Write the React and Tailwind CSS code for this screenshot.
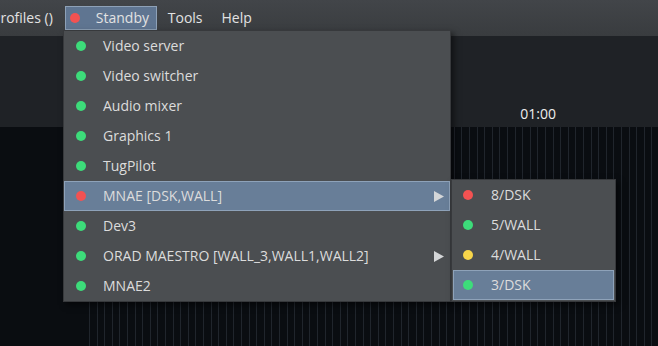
import React from "react";

const items = [
  { label: "Video server", dot: "green" },
  { label: "Video switcher", dot: "green" },
  { label: "Audio mixer", dot: "green" },
  { label: "Graphics 1", dot: "green" },
  { label: "TugPilot", dot: "green" },
  { label: "MNAE [DSK,WALL]", dot: "red", sub: true, active: true },
  { label: "Dev3", dot: "green" },
  { label: "ORAD MAESTRO [WALL_3,WALL1,WALL2]", dot: "green", sub: true },
  { label: "MNAE2", dot: "green" },
];

const subItems = [
  { label: "8/DSK", dot: "red" },
  { label: "5/WALL", dot: "green" },
  { label: "4/WALL", dot: "yellow" },
  { label: "3/DSK", dot: "green", active: true },
];

const dotColors = {
  green: "bg-[#3ddc7a]",
  red: "bg-[#f35252]",
  yellow: "bg-[#f7d54a]",
};

function Dot({ color }) {
  return <span className={`block w-[10px] h-[10px] rounded-full ${dotColors[color]}`} />;
}

function MenuRow({ item, compact }) {
  return (
    <div
      className={`flex items-center h-[30px] border whitespace-nowrap ${
        item.active ? "bg-[#687e98] border-[#8ea2b9]" : "border-transparent"
      }`}
    >
      <div className={`flex justify-center ${compact ? "w-[28px]" : "w-[31px]"}`}>
        <Dot color={item.dot} />
      </div>
      <span className={`${compact ? "ml-[9px]" : "ml-[7px]"} flex-1 text-[#dcdcdc] -mt-[2px]`}>{item.label}</span>
      {item.sub && (
        <svg width="10" height="11" viewBox="0 0 10 11" className="mr-[5px]">
          <path d="M0 0 L10 5.5 L0 11 Z" fill="#d4d6d8" />
        </svg>
      )}
    </div>
  );
}

export default function App() {
  return (
    <div
      className="relative w-[658px] h-[346px] overflow-hidden flex flex-col bg-[#0a0d11] text-[14px]"
      style={{ fontFamily: "'Open Sans', 'Noto Sans', sans-serif" }}
    >
      {/* menu bar */}
      <div className="h-[36px] shrink-0 flex items-center bg-gradient-to-b from-[#424549] to-[#393c3f] text-[#e2e2e2]">
        <span className="-ml-[8px] -mt-[2px]">Profiles ()</span>
        <div className="ml-[12px] flex items-center h-[24px] w-[92px] bg-[#5f7591] border border-[#8ea1b7]">
          <span className="ml-[4px]">
            <Dot color="red" />
          </span>
          <span className="ml-[16px] -mt-[2px]">Standby</span>
        </div>
        <span className="ml-[11px] -mt-[2px]">Tools</span>
        <span className="ml-[19px] -mt-[2px]">Help</span>
      </div>

      {/* upper panel */}
      <div className="h-[91px] shrink-0 bg-[#1f2226] flex items-end justify-end pr-[102px] pb-[3px]">
        <span className="text-[#eeeeee]">01:00</span>
      </div>

      {/* track area */}
      <div className="flex-1 pl-[89px]">
        <div className="h-full bg-[repeating-linear-gradient(90deg,#20252c_0px,#20252c_1px,#0a0d11_1px,#0a0d11_7.6px)]" />
      </div>

      {/* dropdown */}
      <div className="absolute left-[63px] top-[30px] w-[388px] bg-[#4b4e51] border border-[#37393c] shadow-[3px_3px_6px_rgba(0,0,0,0.5)]">
        {items.map((it) => (
          <MenuRow key={it.label} item={it} />
        ))}
      </div>

      {/* submenu */}
      <div className="absolute left-[451px] top-[179px] w-[165px] bg-[#4b4e51] border border-[#37393c] shadow-[3px_3px_6px_rgba(0,0,0,0.5)] px-[1px] pb-[1px]">
        {subItems.map((it) => (
          <MenuRow key={it.label} item={it} compact />
        ))}
      </div>
    </div>
  );
}
